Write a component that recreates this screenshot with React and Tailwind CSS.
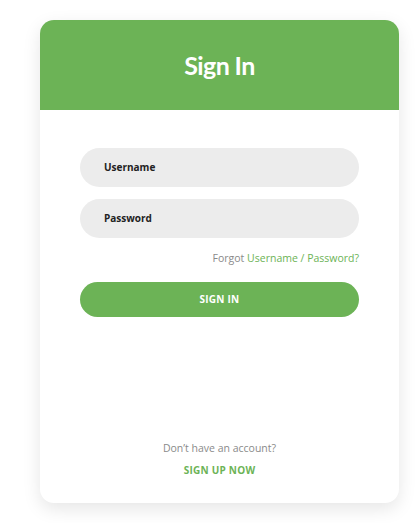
import React from "react";

export default function App() {
  return (
    <div className="w-[419px] h-[523px] bg-white overflow-hidden" style={{ fontFamily: "'Open Sans', 'Noto Sans', sans-serif" }}>
      <div className="ml-[40px] mt-[20px] w-[359px] h-[483px] bg-white rounded-[14px] shadow-[0_6px_18px_rgba(0,0,0,0.10)] overflow-hidden flex flex-col">
        {/* header */}
        <div className="h-[90px] bg-[#6cb356] flex items-center justify-center shrink-0">
          <h1 className="text-white text-[25px] font-bold tracking-tight mt-[2px]" style={{ fontFamily: "Lato, sans-serif" }}>
            Sign In
          </h1>
        </div>

        {/* body */}
        <div className="flex-1 flex flex-col px-[40px] pt-[38px]">
          <div className="h-[39px] rounded-full bg-[#ececec] flex items-center px-[24px] text-[10px] font-bold text-[#222]">
            Username
          </div>
          <div className="h-[39px] mt-[12px] rounded-full bg-[#ececec] flex items-center px-[24px] text-[10px] font-bold text-[#222]">
            Password
          </div>
          <div className="mt-[13px] text-right text-[10.5px] text-[#8a8a8a]">
            Forgot <span className="text-[#6cb356]">Username / Password?</span>
          </div>
          <button className="mt-[15px] h-[35px] rounded-full bg-[#6cb356] text-white text-[10px] font-bold tracking-wide">
            SIGN IN
          </button>

          <div className="mt-auto mb-[25px] flex flex-col items-center">
            <p className="text-[10.5px] text-[#8a8a8a]">Don’t have an account?</p>
            <a className="mt-[6px] text-[10px] font-bold text-[#6cb356] tracking-wide">SIGN UP NOW</a>
          </div>
        </div>
      </div>
    </div>
  );
}
